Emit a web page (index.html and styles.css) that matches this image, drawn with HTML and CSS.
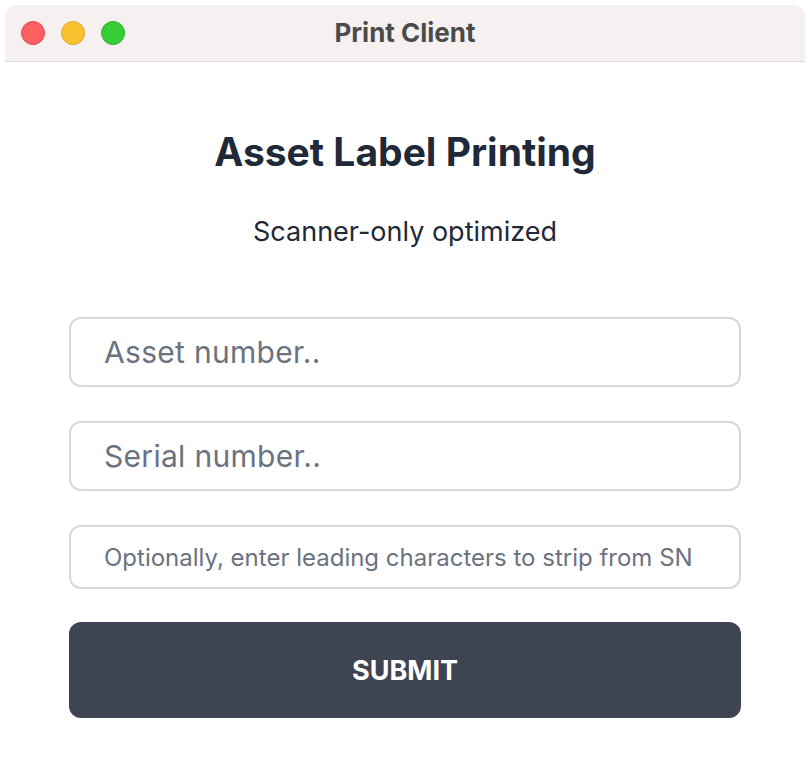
FILE: index.html
```html
<!DOCTYPE html>
<html>
<head>
<meta charset="utf-8">
<link rel="stylesheet" href="styles.css">
</head>
<body>
<div class="window">
  <div class="titlebar">
    <div class="lights">
      <span class="light red"></span>
      <span class="light yellow"></span>
      <span class="light green"></span>
    </div>
    <div class="title">Print Client</div>
  </div>
  <div class="content">
    <h1 class="heading">Asset Label Printing</h1>
    <p class="subtitle">Scanner-only optimized</p>
    <form class="form">
      <input class="field field-lg" type="text" placeholder="Asset number..">
      <input class="field field-lg" type="text" placeholder="Serial number..">
      <input class="field field-sm" type="text" placeholder="Optionally, enter leading characters to strip from SN">
      <button class="submit" type="button">SUBMIT</button>
    </form>
  </div>
</div>
</body>
</html>
```
FILE: styles.css
```css
html, body {
  margin: 0;
  padding: 0;
  background: #ffffff;
}
body {
  padding: 5px;
  font-family: Inter, "Noto Sans", sans-serif;
}
.window {
  width: 800px;
  height: 760px;
  border-radius: 12px;
  overflow: hidden;
  background: #ffffff;
  display: flex;
  flex-direction: column;
}
.titlebar {
  height: 56px;
  flex: none;
  background: #f6f0f0;
  border-bottom: 1px solid #dcdcdc;
  position: relative;
  display: flex;
  align-items: center;
  justify-content: center;
}
.lights {
  position: absolute;
  left: 16px;
  top: 16px;
  display: flex;
  gap: 16px;
}
.light {
  width: 24px;
  height: 24px;
  border-radius: 50%;
  box-sizing: border-box;
}
.red { background: #fe5f61; border: 1px solid #e2474d; }
.yellow { background: #f8c22e; border: 1px solid #dea326; }
.green { background: #38ce3a; border: 1px solid #2eae2c; }
.title {
  font-size: 26px;
  font-weight: 700;
  color: #4b4b4b;
  margin-top: -2px;
}
.content {
  padding: 66px 64px 0;
  display: flex;
  flex-direction: column;
  align-items: center;
}
.heading {
  margin: 0;
  font-size: 39px;
  font-weight: 700;
  color: #1f2937;
  line-height: 48px;
}
.subtitle {
  margin: 40px 0 0;
  font-size: 27px;
  color: #1f2937;
  line-height: 32px;
}
.form {
  margin-top: 69px;
  width: 672px;
  display: flex;
  flex-direction: column;
  gap: 34px;
}
.field {
  box-sizing: border-box;
  width: 100%;
  border: 2px solid #d8d8db;
  border-radius: 12px;
  background: #ffffff;
  padding: 0 33px;
  font-family: Inter, "Noto Sans", sans-serif;
  color: #1f2937;
  outline: none;
}
.field::placeholder {
  color: #6b7280;
  opacity: 1;
}
.field-lg {
  height: 70px;
  font-size: 30px;
  letter-spacing: 0.3px;
}
.field-sm {
  height: 64px;
  font-size: 24px;
}
.submit {
  margin-top: -1px;
  height: 96px;
  border: none;
  border-radius: 12px;
  background: #3f4452;
  color: #ffffff;
  font-family: Inter, "Noto Sans", sans-serif;
  font-size: 27px;
  font-weight: 700;
  cursor: pointer;
}
```
